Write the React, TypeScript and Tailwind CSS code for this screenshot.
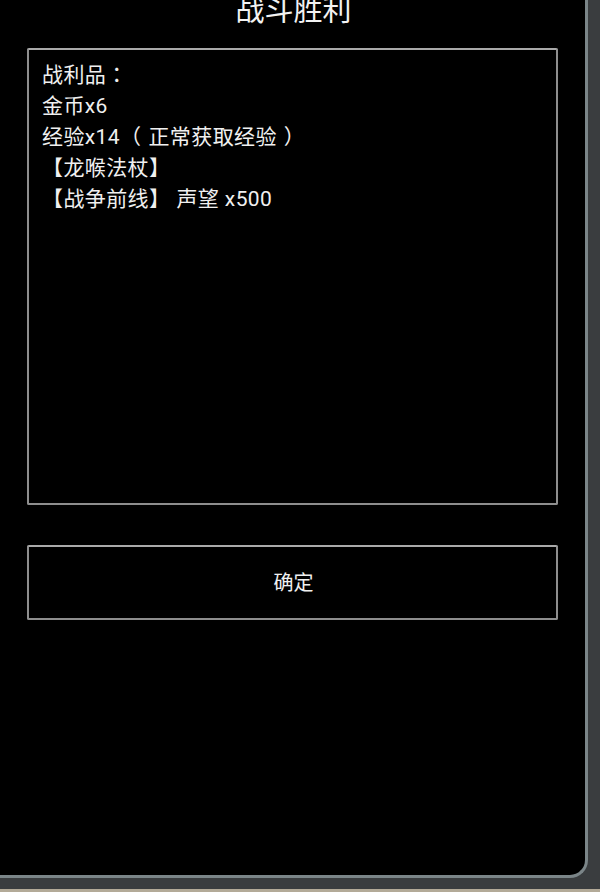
import React from 'react';

const font = { fontFamily: 'Roboto, "Noto Sans CJK TC", "Noto Sans", sans-serif' };

export default function App() {
  return (
    <div className="w-[600px] h-[892px] flex flex-col bg-black overflow-hidden" style={font}>
      <div className="h-[889px] bg-[#3a3d3f] pr-[12px] pb-[11px] flex">
        <div className="flex-1 bg-black border-r-[3px] border-b-[3px] border-[#7b8588] rounded-br-[18px] flex flex-col pl-[27px] pr-[27px]">
          <div className="h-[48px] flex justify-center">
            <h1 className="text-[29px] leading-[29px] -mt-[3px] pl-[2px] text-[#f2f2f2] font-normal">战斗胜利</h1>
          </div>
          <div className="h-[457px] border-2 border-[#8e8e8e] border-t-[#a9a9a9] rounded-[2px] pt-[10px] pl-[13px] text-[21px] leading-[31px] tracking-[0.4px] text-[#f0f0f0]">
            <div>战利品：</div>
            <div>金币x6</div>
            <div>
              经验x14<span className="mr-[7px]">（</span>正常获取经验<span className="ml-[7px]">）</span>
            </div>
            <div>【龙喉法杖】</div>
            <div>
              【战争前线】<span className="ml-[6px]">声望 x500</span>
            </div>
          </div>
          <button className="mt-[40px] h-[75px] border-2 border-[#8e8e8e] border-t-[#a9a9a9] rounded-[2px] text-[20px] text-[#f0f0f0] flex items-center justify-center pl-[2px]">
            确定
          </button>
        </div>
      </div>
      <div className="h-[3px] bg-[#b3aa98]" />
    </div>
  );
}
